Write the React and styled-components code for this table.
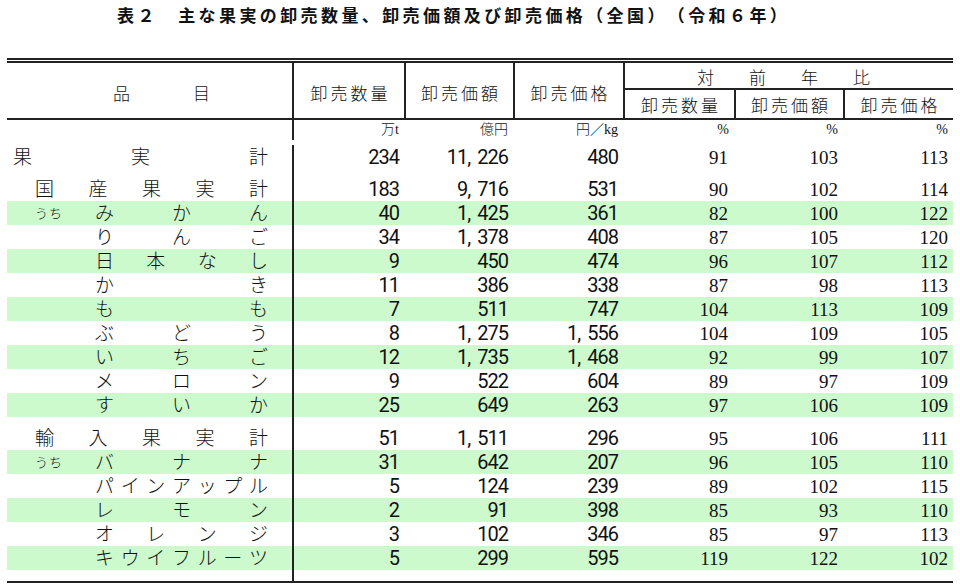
import React from 'react';
import styled, { createGlobalStyle } from 'styled-components';

const GlobalStyle = createGlobalStyle`
  body {
    margin: 0;
    background: #fff;
    color: #111;
    font-family: "Liberation Sans", "Noto Sans CJK JP", sans-serif;
    text-spacing-trim: space-all;
  }
  * {
    box-sizing: border-box;
  }
`;

const COLS = '287px 110px 109px 110px 111px 109px 110px';
const LINE = '#222';

const Page = styled.div`
  width: 960px;
  height: 586px;
  padding-top: 7px;
`;

const Title = styled.h1`
  margin: 0 0 31px;
  padding-left: 117px;
  height: 20px;
  font-size: 17px;
  line-height: 20px;
  font-weight: 700;
  letter-spacing: 3.4px;
  white-space: nowrap;
`;

const Table = styled.div`
  margin-left: 7px;
  width: 946px;
  border-bottom: 2px solid ${LINE};
`;

const Header = styled.div`
  display: grid;
  grid-template-columns: ${COLS};
  grid-template-rows: 27px 28px;
  border-top: 5px double ${LINE};
  border-bottom: 2px solid ${LINE};
  font-size: 17px;
  font-weight: 300;
`;

const HeadCell = styled.div`
  grid-column: ${p => p.$col};
  grid-row: ${p => p.$row};
  display: flex;
  align-items: center;
  justify-content: ${p => (p.$start ? 'flex-start' : 'center')};
  padding-left: ${p => p.$pad || 0}px;
  padding-top: ${p => p.$top || 0}px;
  border-left: ${p => (p.$divider ? `2px solid ${LINE}` : 'none')};
  border-right: ${p => (p.$first ? `2px solid ${LINE}` : 'none')};
  border-bottom: ${p => (p.$under ? `2px solid ${LINE}` : 'none')};
  letter-spacing: ${p => p.$spacing || 0}px;
  white-space: nowrap;
`;

const Spread = styled.span`
  display: flex;
  justify-content: space-between;
  flex: ${p => (p.$width ? 'none' : '1')};
  width: ${p => (p.$width ? `${p.$width}px` : 'auto')};
`;

const Row = styled.div`
  display: grid;
  grid-template-columns: ${COLS};
  height: ${p => p.$h || 24}px;
  background: ${p => (p.$green ? '#ccfacc' : 'transparent')};
  align-items: center;
  padding-bottom: ${p => p.$shift || 0}px;
`;

const Label = styled.div`
  display: flex;
  align-items: center;
  height: 100%;
  padding: 0 24px 0 ${p => p.$indent || 0}px;
  border-right: 2px solid ${LINE};
  font-size: 19px;
  font-weight: 300;
  line-height: 1;
`;

const Prefix = styled.span`
  flex: none;
  width: 60px;
  font-size: 13px;
  letter-spacing: 1px;
`;

const Num = styled.div`
  text-align: right;
  padding-right: ${p => p.$pr || 5}px;
  line-height: 1;
  white-space: nowrap;
  font-family: ${p =>
    p.$serif
      ? '"Liberation Serif", "DejaVu Serif", serif'
      : '"Roboto", "Liberation Sans", sans-serif'};
  font-size: ${p => (p.$serif ? 19 : 20)}px;
  font-weight: 400;
  letter-spacing: ${p => (p.$serif ? 0 : -1)}px;
  font-variant-numeric: tabular-nums;
`;

const Comma = styled.span`
  display: inline-block;
  width: 10px;
  text-align: left;
`;

const Unit = styled.div`
  text-align: right;
  padding-right: 5px;
  line-height: 1;
  font-size: 14px;
  font-weight: 300;
  font-family: ${p =>
    p.$serif ? '"Liberation Serif", serif' : '"Liberation Serif", "Noto Sans CJK JP", serif'};
`;

const rows = [
  { kind: 'total', name: '果実計', v: ['234', '11,226', '480', '91', '103', '113'] },
  { gap: 8 },
  { kind: 'sub', name: '国産果実計', v: ['183', '9,716', '531', '90', '102', '114'] },
  { name: 'みかん', uchi: true, green: true, v: ['40', '1,425', '361', '82', '100', '122'] },
  { name: 'りんご', v: ['34', '1,378', '408', '87', '105', '120'] },
  { name: '日本なし', green: true, v: ['9', '450', '474', '96', '107', '112'] },
  { name: 'かき', v: ['11', '386', '338', '87', '98', '113'] },
  { name: 'もも', green: true, v: ['7', '511', '747', '104', '113', '109'] },
  { name: 'ぶどう', v: ['8', '1,275', '1,556', '104', '109', '105'] },
  { name: 'いちご', green: true, v: ['12', '1,735', '1,468', '92', '99', '107'] },
  { name: 'メロン', v: ['9', '522', '604', '89', '97', '109'] },
  { name: 'すいか', green: true, v: ['25', '649', '263', '97', '106', '109'] },
  { gap: 9 },
  { kind: 'sub', name: '輸入果実計', v: ['51', '1,511', '296', '95', '106', '111'] },
  { name: 'バナナ', uchi: true, green: true, v: ['31', '642', '207', '96', '105', '110'] },
  { name: 'パインアップル', v: ['5', '124', '239', '89', '102', '115'] },
  { name: 'レモン', green: true, v: ['2', '91', '398', '85', '93', '110'] },
  { name: 'オレンジ', v: ['3', '102', '346', '85', '97', '113'] },
  { name: 'キウイフルーツ', green: true, v: ['5', '299', '595', '119', '122', '102'] },
  { gap: 11 },
];

const chars = text => [...text].map((c, i) => <span key={i}>{c}</span>);

const withComma = val => {
  const parts = val.split(',');
  if (parts.length === 1) return val;
  return (
    <>
      {parts[0]}
      <Comma>,</Comma>
      {parts[1]}
    </>
  );
};

const indentOf = kind => (kind === 'total' ? 6 : 28);

const DataRow = ({ row }) => (
  <Row $green={row.green}>
    <Label $indent={indentOf(row.kind)}>
      {!row.kind && <Prefix>{row.uchi ? 'うち' : ''}</Prefix>}
      <Spread>{chars(row.name)}</Spread>
    </Label>
    {row.v.map((val, i) => (
      <Num key={i} $serif={i >= 3} $pr={i === 3 ? 6 : 5}>
        {i < 3 ? withComma(val) : val}
      </Num>
    ))}
  </Row>
);

const App = () => (
  <Page>
    <GlobalStyle />
    <Title>表２　主な果実の卸売数量、卸売価額及び卸売価格（全国）（令和６年）</Title>
    <Table>
      <Header>
        <HeadCell $col="1" $row="1 / span 2" $first $start $pad={106} $top={3}>
          <Spread $width={97}>{chars('品目')}</Spread>
        </HeadCell>
        <HeadCell $col="2" $row="1 / span 2" $spacing={3} $pad={3} $top={3}>卸売数量</HeadCell>
        <HeadCell $col="3" $row="1 / span 2" $divider $spacing={3} $pad={3} $top={3}>卸売価額</HeadCell>
        <HeadCell $col="4" $row="1 / span 2" $divider $spacing={3} $pad={3} $top={3}>卸売価格</HeadCell>
        <HeadCell $col="5 / span 3" $row="1" $divider $under $start $pad={72} $top={2}>
          <Spread $width={173}>{chars('対前年比')}</Spread>
        </HeadCell>
        <HeadCell $col="5" $row="2" $divider $spacing={3} $pad={3}>卸売数量</HeadCell>
        <HeadCell $col="6" $row="2" $divider $spacing={3} $pad={3}>卸売価額</HeadCell>
        <HeadCell $col="7" $row="2" $divider $spacing={3} $pad={3}>卸売価格</HeadCell>
      </Header>
      <Row $h={25} $shift={5}>
        <Label />
        <Unit>万t</Unit>
        <Unit>億円</Unit>
        <Unit>円／kg</Unit>
        <Unit $serif>%</Unit>
        <Unit $serif>%</Unit>
        <Unit $serif>%</Unit>
      </Row>
      {rows.map((row, i) =>
        row.gap ? (
          <Row key={i} $h={row.gap}>
            <Label />
          </Row>
        ) : (
          <DataRow key={i} row={row} />
        )
      )}
    </Table>
  </Page>
);

export default App;
